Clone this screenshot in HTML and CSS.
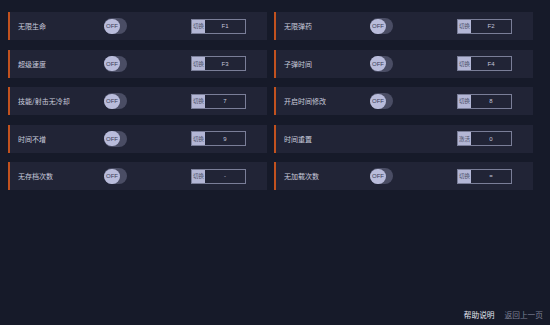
FILE: index.html
```html
<!DOCTYPE html>
<html lang="zh">
<head>
<meta charset="utf-8">
<link rel="stylesheet" href="styles.css">
</head>
<body>
<div class="page">
  <div class="grid">
    <div class="card"><span class="label">无限生命</span><span class="toggle"><span class="knob">OFF</span></span><span class="key"><span class="key-tag">切换</span><span class="key-val">F1</span></span></div>
    <div class="card"><span class="label">无限弹药</span><span class="toggle"><span class="knob">OFF</span></span><span class="key"><span class="key-tag">切换</span><span class="key-val">F2</span></span></div>
    <div class="card"><span class="label">超级速度</span><span class="toggle"><span class="knob">OFF</span></span><span class="key"><span class="key-tag">切换</span><span class="key-val">F3</span></span></div>
    <div class="card"><span class="label">子弹时间</span><span class="toggle"><span class="knob">OFF</span></span><span class="key"><span class="key-tag">切换</span><span class="key-val">F4</span></span></div>
    <div class="card"><span class="label">技能/射击无冷却</span><span class="toggle"><span class="knob">OFF</span></span><span class="key"><span class="key-tag">切换</span><span class="key-val">7</span></span></div>
    <div class="card"><span class="label">开启时间修改</span><span class="toggle"><span class="knob">OFF</span></span><span class="key"><span class="key-tag">切换</span><span class="key-val">8</span></span></div>
    <div class="card"><span class="label">时间不增</span><span class="toggle"><span class="knob">OFF</span></span><span class="key"><span class="key-tag">切换</span><span class="key-val">9</span></span></div>
    <div class="card"><span class="label">时间重置</span><span class="toggle toggle-empty"></span><span class="key"><span class="key-tag">激活</span><span class="key-val">0</span></span></div>
    <div class="card"><span class="label">无存档次数</span><span class="toggle"><span class="knob">OFF</span></span><span class="key"><span class="key-tag">切换</span><span class="key-val">-</span></span></div>
    <div class="card"><span class="label">无加载次数</span><span class="toggle"><span class="knob">OFF</span></span><span class="key"><span class="key-tag">切换</span><span class="key-val">=</span></span></div>
  </div>
  <div class="footer">
    <span class="help">帮助说明</span>
    <span class="back">返回上一页</span>
  </div>
</div>
</body>
</html>
```
FILE: styles.css
```css
html, body {
  margin: 0;
  padding: 0;
}
body {
  width: 550px;
  height: 325px;
  overflow: hidden;
  background: #161a29;
  font-family: "Noto Sans CJK SC", "Noto Sans", sans-serif;
}
.page {
  height: 325px;
  display: flex;
  flex-direction: column;
  box-sizing: border-box;
  padding: 12px 0 0 8px;
}
.grid {
  display: grid;
  grid-template-columns: 259px 259px;
  column-gap: 7px;
  row-gap: 9.5px;
}
.card {
  height: 28px;
  box-sizing: border-box;
  background: #212436;
  border-left: 2px solid #c2521f;
  padding-left: 8px;
  display: flex;
  align-items: center;
}
.label {
  width: 86px;
  font-size: 7px;
  color: #c9cbdc;
  white-space: nowrap;
}
.toggle {
  width: 23px;
  height: 16px;
  border-radius: 8px;
  background: #4a4d64;
  display: flex;
  align-items: center;
}
.toggle-empty {
  visibility: hidden;
}
.knob {
  width: 16px;
  height: 15px;
  border-radius: 8px;
  background: #b9bcdb;
  color: #3b3e57;
  font-family: "Liberation Sans", sans-serif;
  font-size: 6px;
  display: flex;
  align-items: center;
  justify-content: center;
}
.key {
  margin-left: 64px;
  width: 55px;
  height: 15px;
  box-sizing: border-box;
  border: 1px solid #7a7e98;
  display: flex;
  align-items: stretch;
}
.key-tag {
  width: 13px;
  background: #b3b6d5;
  color: #4a4d66;
  font-size: 5.5px;
  display: flex;
  align-items: center;
  justify-content: center;
  white-space: nowrap;
}
.key-val {
  flex: 1;
  color: #c3c6da;
  font-family: "Liberation Sans", sans-serif;
  font-size: 6px;
  display: flex;
  align-items: center;
  justify-content: center;
}
.footer {
  margin-top: auto;
  display: flex;
  justify-content: flex-end;
  align-items: center;
  gap: 10px;
  padding: 0 7px 5px 0;
  font-size: 7.7px;
}
.help {
  color: #e4e5ee;
}
.back {
  color: #7d8196;
}
```
